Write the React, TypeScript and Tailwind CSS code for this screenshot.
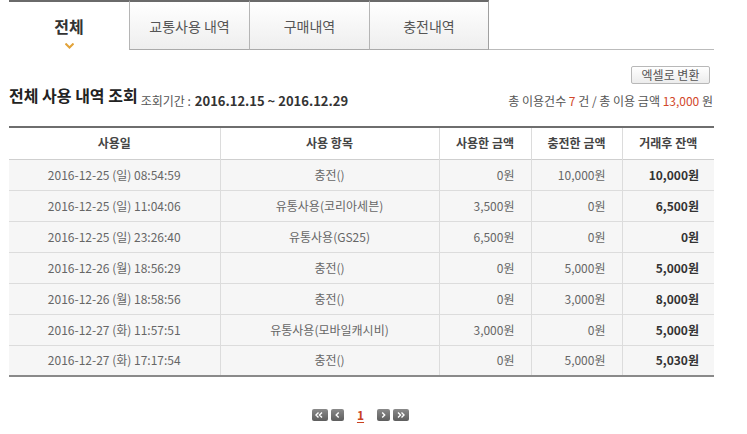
import React from "react";

const rows = [
  ["2016-12-25 (일) 08:54:59", "충전()", "0원", "10,000원", "10,000원"],
  ["2016-12-25 (일) 11:04:06", "유통사용(코리아세븐)", "3,500원", "0원", "6,500원"],
  ["2016-12-25 (일) 23:26:40", "유통사용(GS25)", "6,500원", "0원", "0원"],
  ["2016-12-26 (월) 18:56:29", "충전()", "0원", "5,000원", "5,000원"],
  ["2016-12-26 (월) 18:58:56", "충전()", "0원", "3,000원", "8,000원"],
  ["2016-12-27 (화) 11:57:51", "유통사용(모바일캐시비)", "3,000원", "0원", "5,000원"],
  ["2016-12-27 (화) 17:17:54", "충전()", "0원", "5,000원", "5,030원"],
];

function PageBtn({ children, w }: { children: React.ReactNode; w: string }) {
  return (
    <div className={`${w} h-[12px] rounded-[2px] bg-gradient-to-b from-[#8a8a8a] to-[#5e5e5e] flex items-center justify-center`}>
      {children}
    </div>
  );
}

function Chev({ dir, double }: { dir: "l" | "r"; double?: boolean }) {
  const one = (x: number) =>
    dir === "l" ? `M${x + 2.5} 2.5 L${x} 5 L${x + 2.5} 7.5` : `M${x} 2.5 L${x + 2.5} 5 L${x} 7.5`;
  return (
    <svg width={double ? 9 : 5} height="10" viewBox={`0 0 ${double ? 9 : 5} 10`}>
      <path d={double ? `${one(1)} ${one(4.5)}` : one(1.2)} fill="none" stroke="#fff" strokeWidth="1.4" />
    </svg>
  );
}

export default function App() {
  return (
    <div
      className="w-[747px] h-[434px] bg-white text-[#555] overflow-hidden"
      style={{ fontFamily: '"Noto Sans CJK KR", "Noto Sans", sans-serif' }}
    >
      <div className="ml-[9px] w-[705px]">
        {/* Tabs */}
        <div className="flex">
          <div className="w-[120px] h-[50px] border-t-2 border-[#6a6a6a] flex flex-col items-center">
            <div className="mt-[12px] text-[16px] font-bold text-[#333] leading-[24px]">전체</div>
            <svg width="9" height="6" viewBox="0 0 9 6" className="mt-[5px]">
              <path d="M0.5 0.5 L4.5 4.5 L8.5 0.5" fill="none" stroke="#e2a33a" strokeWidth="2" />
            </svg>
          </div>
          <div className="w-[120px] h-[50px] pt-[2px] border-t-2 border-t-[#6a6a6a] border-l border-l-[#b5b5b5] border-b border-b-[#aaa] bg-gradient-to-b from-white to-[#eeeeee] flex items-center justify-center text-[14px] text-[#555]">
            교통사용 내역
          </div>
          <div className="w-[120px] h-[50px] pt-[2px] border-t-2 border-t-[#6a6a6a] border-l border-l-[#b5b5b5] border-b border-b-[#aaa] bg-gradient-to-b from-white to-[#eeeeee] flex items-center justify-center text-[14px] text-[#555]">
            구매내역
          </div>
          <div className="w-[120px] h-[50px] pt-[2px] border-t-2 border-t-[#6a6a6a] border-l border-r border-l-[#b5b5b5] border-r-[#a0a0a0] border-b border-b-[#aaa] bg-gradient-to-b from-white to-[#eeeeee] flex items-center justify-center text-[14px] text-[#555]">
            충전내역
          </div>
          <div className="flex-1 h-[50px] border-b border-[#bbb]" />
        </div>

        {/* Excel button */}
        <div className="flex justify-end mt-[16px] pr-[4px]">
          <button className="w-[79px] h-[18px] border border-[#b8b8b8] rounded-[2px] bg-gradient-to-b from-white to-[#ececec] text-[12px] leading-[16px] text-[#555]">
            엑셀로 변환
          </button>
        </div>

        {/* Title row */}
        <div className="flex items-end justify-between mt-[4px] h-[22px]">
          <div className="flex items-end">
            <span className="text-[16px] font-bold text-[#222] leading-[22px] mb-[4px]">전체 사용 내역 조회</span>
            <span className="ml-[3px] text-[12px] text-[#555] leading-[19px]">조회기간 :</span>
            <span className="ml-[4px] text-[13px] font-bold text-[#333] leading-[19px]">2016.12.15 ~ 2016.12.29</span>
          </div>
          <div className="text-[12px] leading-[19px] text-[#555] pr-[1px]">
            총 이용건수 <span className="text-[#d2472a]">7</span> 건 / 총 이용 금액{" "}
            <span className="text-[#d2472a]">13,000</span> 원
          </div>
        </div>

        {/* Table */}
        <table className="mt-[16px] w-[705px] table-fixed border-collapse border-t-2 border-b-2 border-t-[#6e6e6e] border-b-[#8a8a8a] text-[12px]">
          <colgroup>
            <col className="w-[211px]" />
            <col className="w-[219px]" />
            <col className="w-[92px]" />
            <col className="w-[91px]" />
            <col className="w-[92px]" />
          </colgroup>
          <thead>
            <tr className="h-[32px] bg-white border-b border-[#cfcfcf]">
              {["사용일", "사용 항목", "사용한 금액", "충전한 금액", "거래후 잔액"].map((h, i) => (
                <th
                  key={h}
                  className={`font-semibold text-[#444] text-center p-0 ${i > 0 ? "border-l border-[#dcdcdc]" : ""}`}
                >
                  {h}
                </th>
              ))}
            </tr>
          </thead>
          <tbody>
            {rows.map((r, idx) => (
              <tr key={idx} className={`h-[31px] bg-[#f6f6f6] ${idx < rows.length - 1 ? "border-b border-[#dcdcdc]" : ""}`}>
                <td className="text-center text-[#666] p-0">{r[0]}</td>
                <td className="text-center text-[#666] p-0 border-l border-[#dcdcdc]">{r[1]}</td>
                <td className="text-right text-[#666] p-0 pr-[16px] border-l border-[#dcdcdc]">{r[2]}</td>
                <td className="text-right text-[#666] p-0 pr-[16px] border-l border-[#dcdcdc]">{r[3]}</td>
                <td className="text-right text-[#333] font-bold p-0 pr-[15px] border-l border-[#dcdcdc]">{r[4]}</td>
              </tr>
            ))}
          </tbody>
        </table>

        {/* Pagination */}
        <div className="mt-[32px] flex items-center justify-center gap-[3px] pr-[2px]">
          <PageBtn w="w-[16px]"><Chev dir="l" double /></PageBtn>
          <PageBtn w="w-[13px]"><Chev dir="l" /></PageBtn>
          <span className="mx-[10px] text-[12px] font-bold text-[#c9411f] underline underline-offset-2 leading-[12px]">1</span>
          <PageBtn w="w-[13px]"><Chev dir="r" /></PageBtn>
          <PageBtn w="w-[16px]"><Chev dir="r" double /></PageBtn>
        </div>
      </div>
    </div>
  );
}
